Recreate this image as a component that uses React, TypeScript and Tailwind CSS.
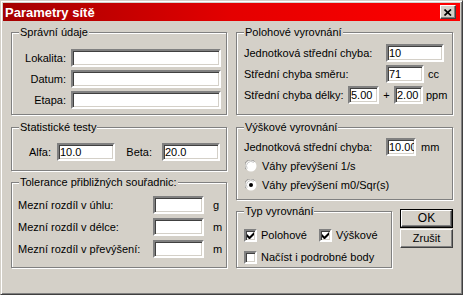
import React from 'react';

/** Classic etched group box with its caption laid over the top edge. */
function Group({ title, className = '', children }: { title: string; className?: string; children?: React.ReactNode }) {
  return (
    <div className={`relative border border-[#808080] shadow-[inset_1px_1px_0_#fff,1px_1px_0_#fff] ${className}`}>
      <span className="absolute left-[7px] top-[-7px] bg-[#d4d0c8] px-[1px] leading-[13px] whitespace-nowrap">{title}</span>
      {children}
    </div>
  );
}

/** Sunken edit field. */
function Field({ value = '', className = '' }: { value?: string; className?: string }) {
  return (
    <div
      className={`flex h-[18px] items-center overflow-hidden whitespace-nowrap border-2 border-t-[#808080] border-l-[#808080] border-b-white border-r-white bg-white pl-[1px] leading-[13px] shadow-[inset_1px_1px_0_#404040,inset_-1px_-1px_0_#d4d0c8] ${className}`}
    >
      {value}
    </div>
  );
}

function Check({ checked }: { checked?: boolean }) {
  return (
    <span className="flex h-[13px] w-[13px] shrink-0 items-center justify-center border-2 border-t-[#808080] border-l-[#808080] border-b-white border-r-white bg-white shadow-[inset_1px_1px_0_#404040,inset_-1px_-1px_0_#d4d0c8]">
      {checked && (
        <svg width="7" height="7" viewBox="0 0 7 7" aria-hidden>
          <path d="M0 2v3l2 2h1l4-4V0L2.5 4.5z" fill="#000" />
        </svg>
      )}
    </span>
  );
}

function Radio({ checked }: { checked?: boolean }) {
  return (
    <svg width="12" height="12" viewBox="0 0 12 12" className="shrink-0" aria-hidden>
      <circle cx="6" cy="6" r="5.5" fill="#fff" />
      <path d="M1.2 9.4A5.5 5.5 0 0 1 9.6 1.6" fill="none" stroke="#9a9a9a" strokeWidth="1" />
      <path d="M2.3 8.6A4.5 4.5 0 0 1 8.8 2.5" fill="none" stroke="#c8c8c8" strokeWidth="1" />
      {checked && <circle cx="6" cy="6" r="2" fill="#000" />}
    </svg>
  );
}

function Btn({ children, isDefault }: { children: React.ReactNode; isDefault?: boolean }) {
  return (
    <div className={`h-[19px] w-[53px] ${isDefault ? 'border border-black' : ''}`}>
      <div className="flex h-full w-full items-center justify-center border border-t-white border-l-white border-b-[#404040] border-r-[#404040] shadow-[inset_-1px_-1px_0_#808080] leading-[13px]">
        {children}
      </div>
    </div>
  );
}

export default function App() {
  return (
    <div className="h-[295px] w-[463px] border border-t-[#d4d0c8] border-l-[#d4d0c8] border-b-[#404040] border-r-[#404040] bg-[#d4d0c8] p-[2px] font-['Liberation_Sans',Arial,sans-serif] text-[11px] leading-[13px] text-black shadow-[inset_1px_1px_0_#fff,inset_-1px_-1px_0_#808080]">
      {/* title bar */}
      <div className="flex h-[18px] items-center justify-between bg-gradient-to-r from-[#a40000] via-[#e40000] to-[#ff0000] pl-[2px] pr-[4px]">
        <span className="text-[13px] font-bold leading-[15px] text-white">Parametry sítě</span>
        <div className="flex h-[14px] w-[16px] items-center justify-center border border-t-white border-l-white border-b-[#404040] border-r-[#404040] bg-[#d4d0c8] shadow-[inset_-1px_-1px_0_#808080]">
          <svg width="8" height="7" viewBox="0 0 8 7" aria-hidden>
            <path d="M0.5 0.5L7 6.5M7 0.5L0.5 6.5" stroke="#000" strokeWidth="1.7" />
          </svg>
        </div>
      </div>

      <div className="mt-[11px] flex gap-[9px] pl-[8px]">
        {/* left column */}
        <div className="flex w-[216px] flex-col">
          <Group title="Správní údaje" className="h-[83px]">
            <div className="flex flex-col gap-[3px] pt-[16px]">
              {['Lokalita:', 'Datum:', 'Etapa:'].map((l) => (
                <div key={l} className="flex h-[18px] items-center">
                  <span className="w-[54px] text-right">{l}</span>
                  <Field className="ml-[5px] w-[150px]" />
                </div>
              ))}
            </div>
          </Group>

          <Group title="Statistické testy" className="mt-[12px] h-[44px]">
            <div className="mt-[15px] flex h-[18px] items-center">
              <span className="w-[39px] text-right">Alfa:</span>
              <Field value="10.0" className="ml-[6px] w-[58px]" />
              <span className="w-[37px] text-right">Beta:</span>
              <Field value="20.0" className="ml-[10px] w-[58px]" />
            </div>
          </Group>

          <Group title="Tolerance přibližných souřadnic:" className="mt-[11px] h-[86px]">
            <div className="flex flex-col gap-[4px] pl-[6px] pt-[13px]">
              {[
                ['Mezní rozdíl v úhlu:', 'g'],
                ['Mezní rozdíl v délce:', 'm'],
                ['Mezní rozdíl v převýšení:', 'm'],
              ].map(([l, u]) => (
                <div key={l} className="flex h-[18px] items-center">
                  <span className="w-[135px]">{l}</span>
                  <Field className="w-[51px]" />
                  <span className="ml-[9px]">{u}</span>
                </div>
              ))}
            </div>
          </Group>
        </div>

        {/* right column */}
        <div className="flex w-[217px] flex-col">
          <Group title="Polohové vyrovnání" className="h-[83px]">
            <div className="flex flex-col gap-[3px] pl-[7px] pt-[11px]">
              <div className="flex h-[18px] items-center">
                <span className="w-[142px]">Jednotková střední chyba:</span>
                <Field value="10" className="w-[58px]" />
              </div>
              <div className="flex h-[18px] items-center">
                <span className="w-[142px]">Střední chyba směru:</span>
                <Field value="71" className="w-[38px]" />
                <span className="ml-[4px]">cc</span>
              </div>
              <div className="flex h-[18px] items-center">
                <span className="w-[104px]">Střední chyba délky:</span>
                <Field value="5.00" className="w-[31px]" />
                <span className="w-[15px] text-center">+</span>
                <Field value="2.00" className="w-[29px]" />
                <span className="ml-[3px]">ppm</span>
              </div>
            </div>
          </Group>

          <Group title="Výškové vyrovnání" className="mt-[12px] h-[73px]">
            <div className="flex flex-col pl-[7px] pt-[10px]">
              <div className="flex h-[18px] items-center">
                <span className="w-[142px]">Jednotková střední chyba:</span>
                <Field value="10.00" className="w-[30px]" />
                <span className="ml-[5px]">mm</span>
              </div>
              <div className="mt-[2px] flex h-[16px] items-center pl-[1px]">
                <Radio />
                <span className="ml-[5px]">Váhy převýšení 1/s</span>
              </div>
              <div className="mt-[3px] flex h-[16px] items-center pl-[1px]">
                <Radio checked />
                <span className="ml-[5px]">Váhy převýšení m0/Sqr(s)</span>
              </div>
            </div>
          </Group>

          <div className="mt-[9px] flex">
            <Group title="Typ vyrovnání" className="mt-[2px] h-[57px] w-[157px]">
              <div className="flex flex-col gap-[9px] pl-[7px] pt-[17px]">
                <div className="flex h-[13px] items-center">
                  <div className="flex w-[75px] items-center">
                    <Check checked />
                    <span className="ml-[4px]">Polohové</span>
                  </div>
                  <Check checked />
                  <span className="ml-[4px]">Výškové</span>
                </div>
                <div className="flex h-[13px] items-center">
                  <Check />
                  <span className="ml-[4px]">Načíst i podrobné body</span>
                </div>
              </div>
            </Group>
            <div className="ml-[8px] flex flex-col gap-[1px]">
              <Btn isDefault>
                <span className="text-[12px]">OK</span>
              </Btn>
              <Btn>Zrušit</Btn>
            </div>
          </div>
        </div>
      </div>
    </div>
  );
}
